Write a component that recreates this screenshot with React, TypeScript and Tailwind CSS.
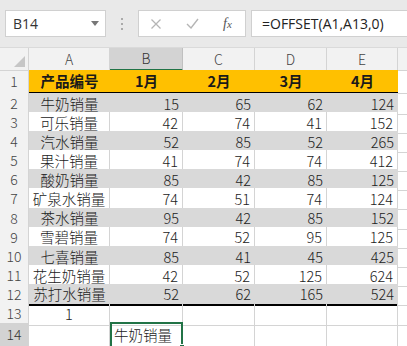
import React from "react";

const rows: [string, number, number, number, number][] = [
  ["牛奶销量", 15, 65, 62, 124],
  ["可乐销量", 42, 74, 41, 152],
  ["汽水销量", 52, 85, 52, 265],
  ["果汁销量", 41, 74, 74, 412],
  ["酸奶销量", 85, 42, 85, 125],
  ["矿泉水销量", 74, 51, 74, 124],
  ["茶水销量", 95, 42, 85, 152],
  ["雪碧销量", 74, 52, 95, 125],
  ["七喜销量", 85, 41, 45, 425],
  ["花生奶销量", 42, 52, 125, 624],
  ["苏打水销量", 52, 62, 165, 524],
];

const cols = "grid grid-cols-[29px_81px_73px_72px_72px_71px_1fr]";
const font = { fontFamily: '"Noto Sans CJK SC", "Noto Sans", sans-serif' };

function RowHead({ n, active }: { n: number; active?: boolean }) {
  return (
    <div
      className={
        "flex items-center justify-center border-r border-b border-[#d4d4d4] text-[14px] font-light " +
        (active ? "bg-[#d3d3d3] text-[#333]" : "bg-[#f2f2f2] text-[#444]")
      }
    >
      {n}
    </div>
  );
}

export default function App() {
  return (
    <div className="w-[407px] h-[346px] overflow-hidden bg-white text-[#222]" style={font}>
      {/* formula bar */}
      <div className="h-[48px] bg-[#e9e9e9] flex items-center pl-[5px] gap-0 border-b border-[#dadada]">
        <div className="w-[101px] h-[27px] bg-white border border-[#d0d0d0] flex items-center justify-between pl-[7px] pr-[6px]">
          <span className="text-[14px] text-[#333]" style={{ fontFamily: '"Open Sans", sans-serif' }}>B14</span>
          <svg width="8" height="5" viewBox="0 0 8 5"><path d="M0 0h8L4 5z" fill="#777" /></svg>
        </div>
        <div className="w-[32px] flex flex-col items-center gap-[3px]">
          <span className="w-[2px] h-[2px] bg-[#aaa]" />
          <span className="w-[2px] h-[2px] bg-[#aaa]" />
          <span className="w-[2px] h-[2px] bg-[#aaa]" />
        </div>
        <div className="w-[108px] h-[27px] bg-white border border-[#d0d0d0] flex items-center pl-[11px]">
          <svg width="12" height="12" viewBox="0 0 12 12" className="mr-[24px]">
            <path d="M1.5 1.5l9 9M10.5 1.5l-9 9" stroke="#b5b5b5" strokeWidth="1.3" />
          </svg>
          <svg width="13" height="11" viewBox="0 0 13 11" className="mr-[24px]">
            <path d="M1 6l4 4 7-9" stroke="#b5b5b5" strokeWidth="1.4" fill="none" />
          </svg>
          <span className="text-[14px] italic text-[#555]" style={{ fontFamily: '"Liberation Serif", serif' }}>
            f<span className="text-[11px]">x</span>
          </span>
        </div>
        <div className="ml-[5px] flex-1 h-[27px] bg-white border border-[#d0d0d0] border-r-0 flex items-center pl-[10px]">
          <span className="text-[14px] text-[#222]" style={{ fontFamily: '"Open Sans", sans-serif' }}>=OFFSET(A1,A13,0)</span>
        </div>
      </div>

      {/* column headers */}
      <div className={cols + " h-[22px] text-[14px] text-[#444] font-light"}>
        <div className="bg-[#f2f2f2] border-r border-b border-[#d4d4d4] relative">
          <svg width="11" height="11" viewBox="0 0 11 11" className="absolute right-[3px] bottom-[3px]">
            <path d="M11 0v11H0z" fill="#c6c6c6" />
          </svg>
        </div>
        <div className="bg-[#f2f2f2] border-r border-b border-[#d4d4d4] flex items-center justify-center">A</div>
        <div className="bg-[#d3d3d3] border-r border-[#c0c0c0] border-b-2 border-b-[#217346] flex items-center justify-center text-[#333]">B</div>
        <div className="bg-[#f2f2f2] border-r border-b border-[#d4d4d4] flex items-center justify-center">C</div>
        <div className="bg-[#f2f2f2] border-r border-b border-[#d4d4d4] flex items-center justify-center">D</div>
        <div className="bg-[#f2f2f2] border-r border-b border-[#d4d4d4] flex items-center justify-center">E</div>
        <div className="bg-[#f2f2f2] border-b border-[#d4d4d4]" />
      </div>

      {/* row 1 header */}
      <div className={cols + " h-[23px]"}>
        <RowHead n={1} />
        <div className="col-span-5 grid grid-cols-[81px_73px_72px_72px_71px] bg-[#ffc000] border-b-2 border-black text-[14.5px] font-bold text-[#1a1a1a]">
          {["产品编号", "1月", "2月", "3月", "4月"].map((t) => (
            <div key={t} className="flex items-center justify-center">{t}</div>
          ))}
        </div>
        <div className="border-b border-[#d4d4d4]" />
      </div>

      {/* data rows */}
      {rows.map((r, i) => {
        const gray = i % 2 === 0;
        const last = i === rows.length - 1;
        return (
          <div key={r[0]} className={cols + " h-[19.1px]"}>
            <RowHead n={i + 2} />
            <div
              className={
                "col-span-5 grid grid-cols-[81px_73px_72px_72px_71px] text-[14.5px] font-light " +
                (gray ? "bg-[#d9d9d9] " : "bg-white ") +
                (last ? "border-b-2 border-black" : "")
              }
            >
              <div className={"flex items-center justify-center leading-none " + (gray ? "" : "border-r border-[#d4d4d4]")}>{r[0]}</div>
              {r.slice(1).map((v, j) => (
                <div
                  key={j}
                  className={"flex items-center justify-end pr-[4px] leading-none " + (gray ? "" : "border-r border-[#d4d4d4]")}
                >
                  {v}
                </div>
              ))}
            </div>
            <div className="border-b border-[#d4d4d4]" />
          </div>
        );
      })}

      {/* row 13 */}
      <div className={cols + " h-[20px] text-[14.5px] font-light"}>
        <RowHead n={13} />
        <div className="border-r border-b border-[#d4d4d4] flex items-center justify-center">1</div>
        <div className="border-r border-b border-[#d4d4d4]" />
        <div className="border-r border-b border-[#d4d4d4]" />
        <div className="border-r border-b border-[#d4d4d4]" />
        <div className="border-r border-b border-[#d4d4d4]" />
        <div className="border-b border-[#d4d4d4]" />
      </div>

      {/* row 14 */}
      <div className={cols + " h-[22px] text-[14.5px] font-light"}>
        <RowHead n={14} active />
        <div className="border-r border-b border-[#d4d4d4]" />
        <div className="relative border-2 border-[#217346] flex items-center pl-[2px] -mt-px">
          牛奶销量
          <span className="absolute -right-[4px] -bottom-[4px] w-[6px] h-[6px] bg-[#217346] border border-white" />
        </div>
        <div className="border-r border-b border-[#d4d4d4]" />
        <div className="border-r border-b border-[#d4d4d4]" />
        <div className="border-r border-b border-[#d4d4d4]" />
        <div className="border-b border-[#d4d4d4]" />
      </div>
    </div>
  );
}
